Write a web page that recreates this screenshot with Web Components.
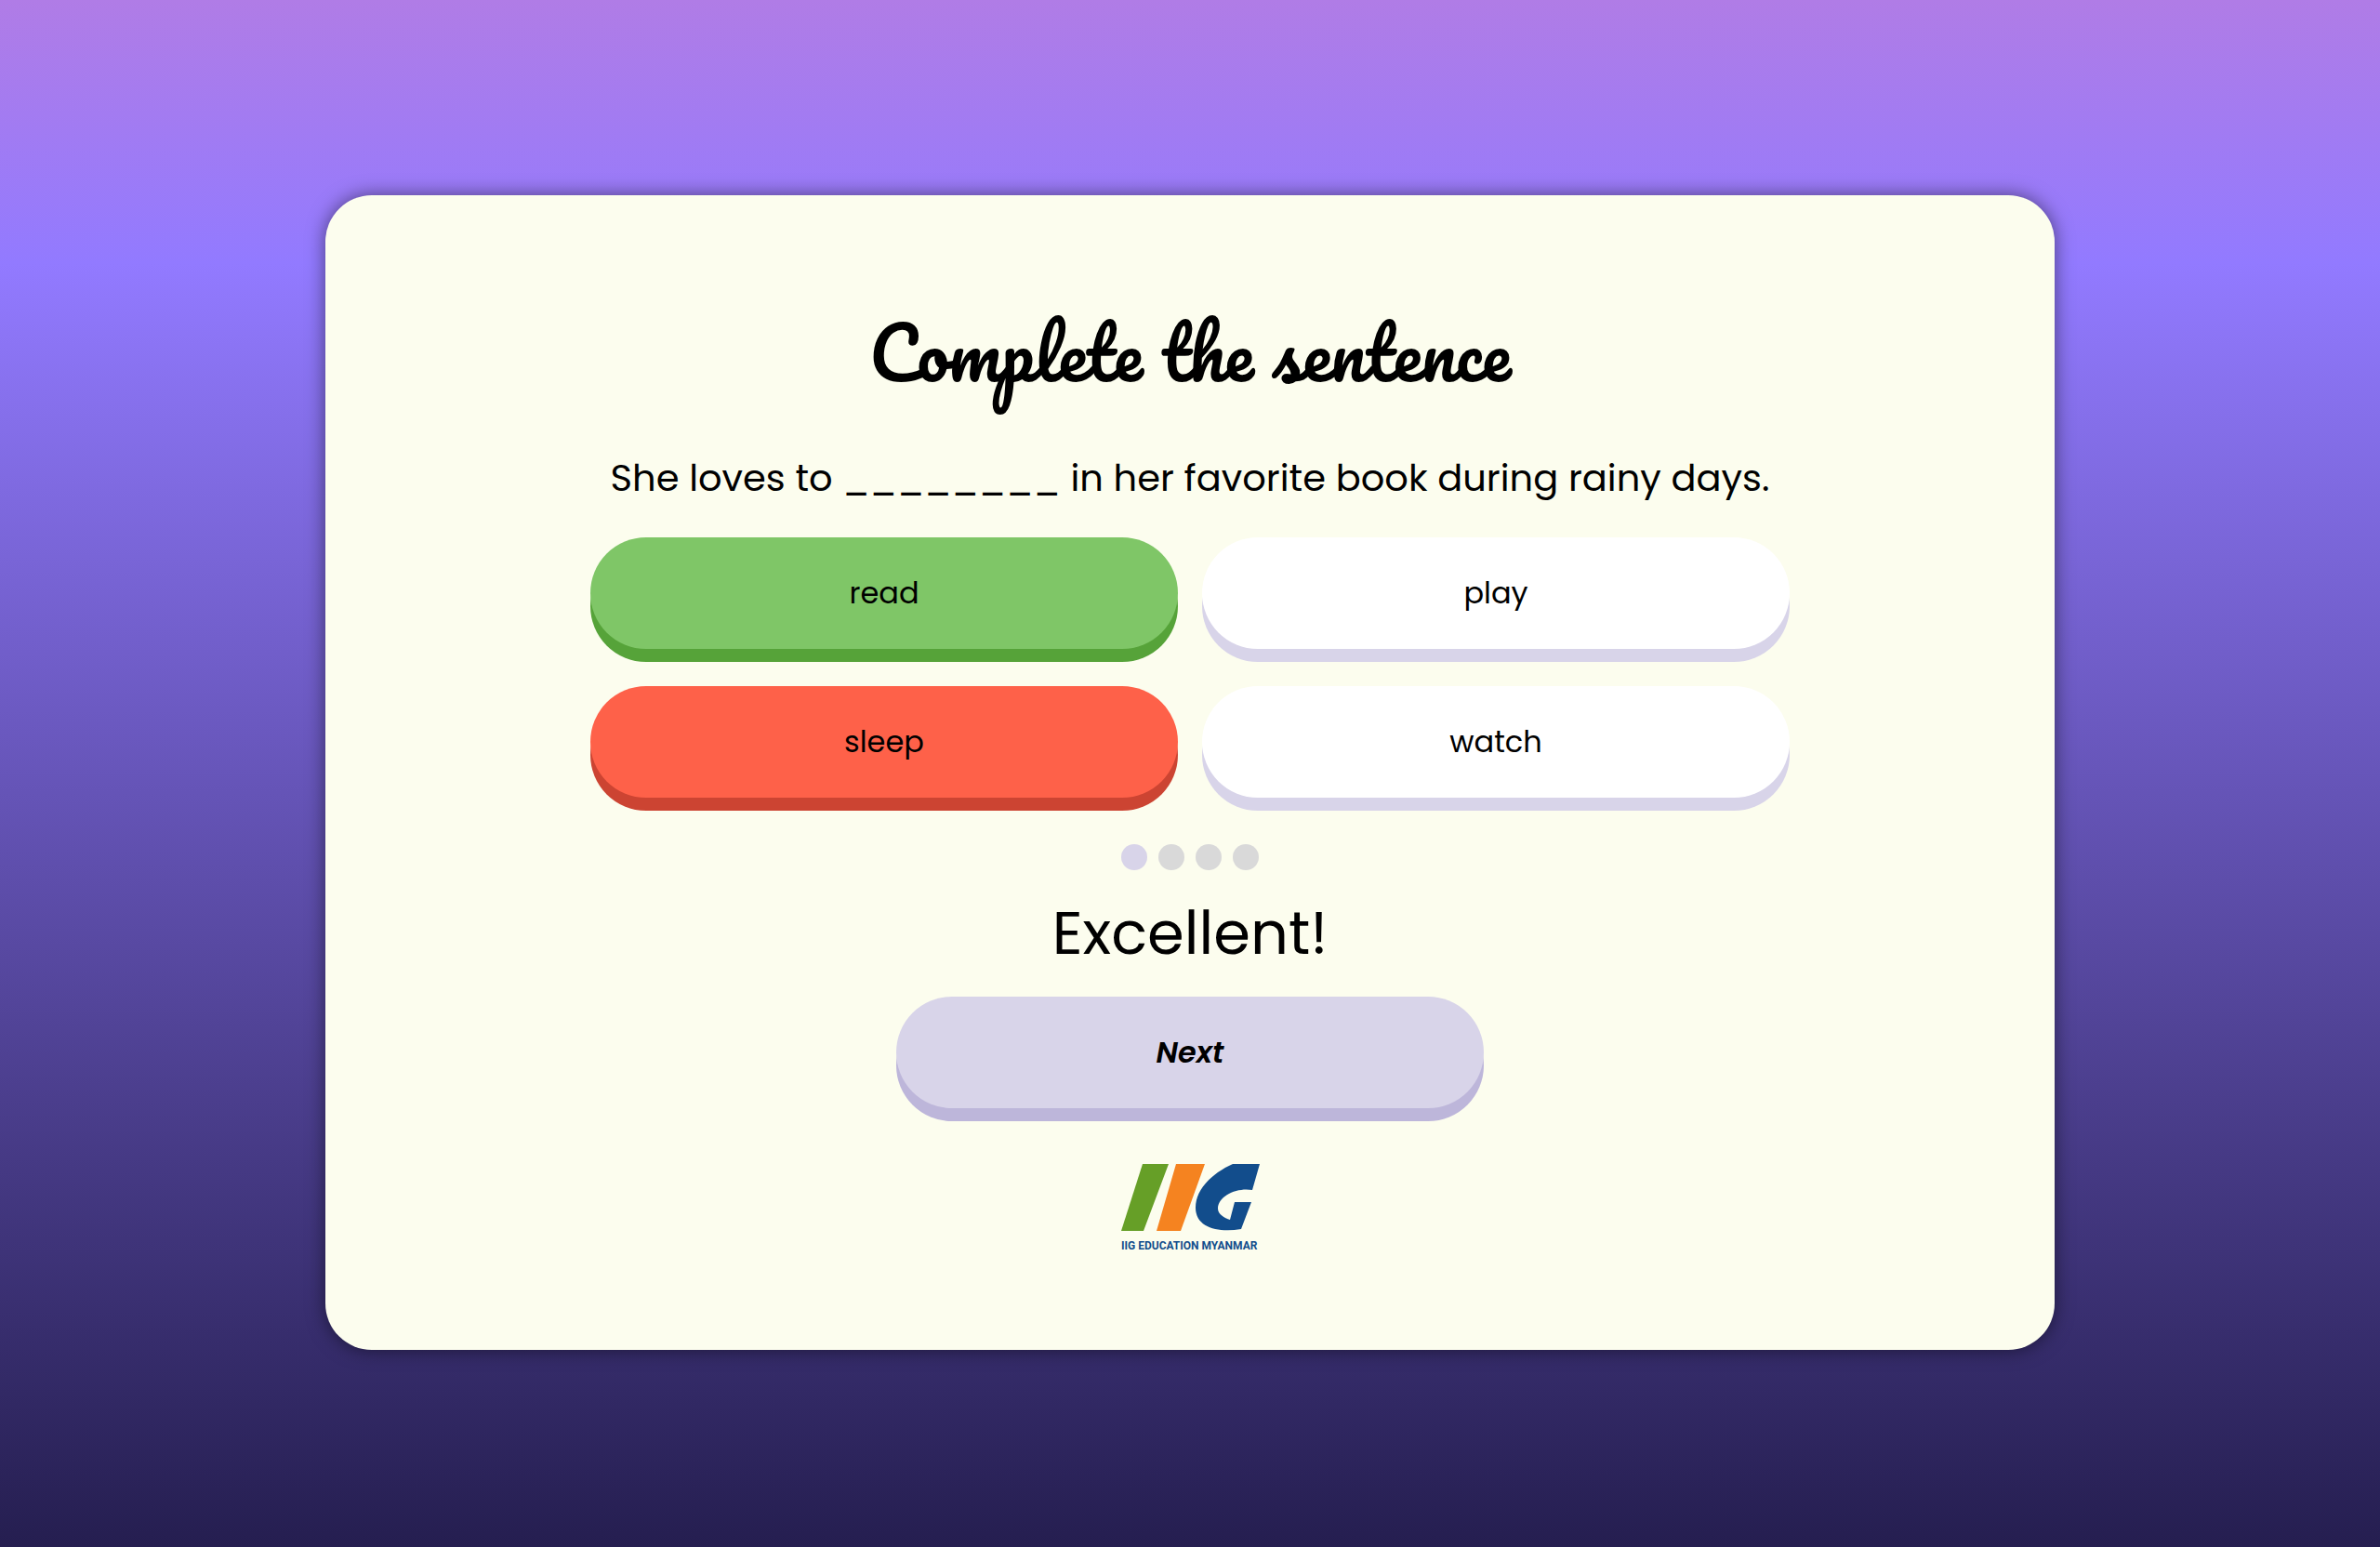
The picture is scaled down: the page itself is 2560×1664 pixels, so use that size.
<!DOCTYPE html>
<html lang="en">
<head>
<meta charset="utf-8">
<title>Complete the sentence</title>
<style>
  body { margin: 0; font-family: Poppins, Inter, sans-serif; color: #000; }
</style>
</head>
<body>
<quiz-page></quiz-page>
<script>
const define = (name, html) => {
  const template = document.createElement('template');
  template.innerHTML = html;
  customElements.define(name, class extends HTMLElement {
    constructor() {
      super();
      this.attachShadow({ mode: 'open' }).append(template.content.cloneNode(true));
    }
  });
};

define('pill-button', `
  <style>
    :host { display: block; --face: #fff; --edge: #d8d4e9; padding-bottom: 14px; }
    :host([state="right"]) { --face: #7fc667; --edge: #56a339; }
    :host([state="wrong"]) { --face: #fe6149; --edge: #cc4432; }
    :host([state="next"]) { --face: #d8d4e9; --edge: #bdb6da; font-weight: 600; font-style: italic; }
    button {
      display: block; width: 100%; height: 120px; padding: 0; border: 0; border-radius: 60px;
      background: var(--face); box-shadow: 0 14px 0 var(--edge);
      font: inherit; font-size: 32px; color: inherit; cursor: pointer;
    }
  </style>
  <button type="button"><slot></slot></button>`);

define('progress-dots', `
  <style>
    :host { display: flex; gap: 12px; }
    span { width: 28px; height: 28px; border-radius: 50%; background: #d9d9d9; }
    .on { background: #d8d4e9; }
  </style>
  <span class="on"></span><span></span><span></span><span></span>`);

define('iig-logo', `
  <style>
    :host { display: block; width: 150px; }
    svg { display: block; width: 100%; }
    text { font: bold 12px Roboto, "Liberation Sans", sans-serif; fill: #124d8c; }
  </style>
  <svg viewBox="0 0 150 96" role="img" aria-label="IIG Education Myanmar">
    <path fill="#669f27" d="M24 0H52L25 72H1z"/>
    <path fill="#f58320" d="M60 0H91L65 72H39z"/>
    <path fill="#124d8c" d="M121 0H150L142 28C126 25 105 34 105 48C105 54 112 58 118 60L123 41H141L130 70C106 74 81 69 81 47C81 27 99 10 121 0z"/>
    <text x="1" y="92">IIG EDUCATION MYANMAR</text>
  </svg>`);

define('quiz-card', `
  <style>
    :host {
      display: flex; flex-direction: column; align-items: center; box-sizing: border-box;
      width: 1860px; max-width: 90%; padding: 102px 40px;
      border-radius: 50px; background: #fcfdee; box-shadow: 0 0 20px rgba(0, 0, 0, .5);
    }
    h1 { margin: 0; font: 400 76px/134px Pacifico, Lato, cursive; white-space: nowrap; }
    .question { margin: 38px 0 34px; font-size: 40px; line-height: 60px; }
    .answers { display: grid; grid-template-columns: 1fr 1fr; gap: 26px; width: 1290px; max-width: 100%; }
    progress-dots { margin: 36px 0 20px; }
    .result { margin: 0 0 20px; font-size: 64px; line-height: 96px; }
    .next { width: 632px; max-width: 100%; }
    iig-logo { margin: 46px 0 2px; }
  </style>
  <h1>Complete the sentence</h1>
  <p class="question">She loves to ________ in her favorite book during rainy days.</p>
  <div class="answers">
    <pill-button state="right">read</pill-button>
    <pill-button>play</pill-button>
    <pill-button state="wrong">sleep</pill-button>
    <pill-button>watch</pill-button>
  </div>
  <progress-dots></progress-dots>
  <p class="result">Excellent!</p>
  <pill-button class="next" state="next">Next</pill-button>
  <iig-logo></iig-logo>`);

define('quiz-page', `
  <style>
    :host {
      display: flex; align-items: center; justify-content: center; box-sizing: border-box;
      min-height: 100vh; padding-bottom: 2px;
      background: linear-gradient(#b07ce6, #927aff 17%, #251e50);
    }
  </style>
  <quiz-card></quiz-card>`);
</script>
</body>
</html>
